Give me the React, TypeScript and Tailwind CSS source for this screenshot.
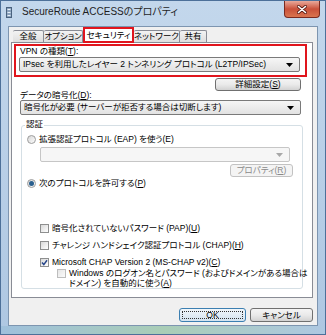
import React from "react";

const U = ({ children }: { children: React.ReactNode }) => (
  <span className="underline underline-offset-[1px] decoration-[0.8px]">{children}</span>
);

function Arrow({ disabled }: { disabled?: boolean }) {
  return (
    <svg width="7" height="4" viewBox="0 0 7 4" className="shrink-0">
      <path d="M0 0h7L3.5 4z" fill={disabled ? "#a8a8a8" : "#000"} />
    </svg>
  );
}

function Combo({ text, disabled }: { text?: React.ReactNode; disabled?: boolean }) {
  return (
    <div
      className={`h-[15px] flex items-center justify-between rounded-[2px] border pl-[3px] pr-[6px] ${
        disabled
          ? "border-[#c6c6c6] bg-[#f6f6f6]"
          : "border-[#7a7a7a] bg-linear-to-b from-[#f6f6f6] to-[#e2e2e2]"
      }`}
    >
      <span className="whitespace-nowrap leading-none">{text}</span>
      <Arrow disabled={disabled} />
    </div>
  );
}

function Btn({
  children,
  disabled,
  def,
  className,
}: {
  children: React.ReactNode;
  disabled?: boolean;
  def?: boolean;
  className?: string;
}) {
  const base = disabled
    ? "border-[#c2c2c2] bg-[#f4f4f4] text-[#8a8a8a]"
    : def
    ? "border-[#3c7fb1] bg-linear-to-b from-[#f1f7fb] to-[#d3e3ef]"
    : "border-[#707070] bg-linear-to-b from-[#f4f4f4] via-[#eaeaea] to-[#d2d2d2]";
  return (
    <div
      className={`flex items-center justify-center rounded-[3px] border whitespace-nowrap ${base} ${className ?? ""}`}
    >
      {def ? (
        <div className="w-[calc(100%-4px)] h-[calc(100%-4px)] border border-dotted border-[#333] flex items-center justify-center leading-none">
          {children}
        </div>
      ) : (
        <span className="leading-none">{children}</span>
      )}
    </div>
  );
}

function Radio({ checked }: { checked?: boolean }) {
  return (
    <span className="w-[9px] h-[9px] rounded-full border border-[#9c9c9c] bg-linear-to-br from-[#d6d6d6] to-[#fdfdfd] flex items-center justify-center shrink-0">
      {checked && <span className="w-[5px] h-[5px] rounded-full bg-[#2a5f8e]" />}
    </span>
  );
}

function Check({ checked, dim }: { checked?: boolean; dim?: boolean }) {
  return (
    <span
      className={`w-[9px] h-[9px] border flex items-center justify-center shrink-0 bg-linear-to-br ${
        dim ? "border-[#bdbdbd] from-[#e6e6e6] to-[#fbfbfb]" : "border-[#8e8f8f] from-[#d9d9d9] to-[#ffffff]"
      }`}
    >
      {checked && (
        <svg width="7" height="7" viewBox="0 0 7 7">
          <path d="M1 3.6l1.8 2L6 1.2" stroke="#27468a" strokeWidth="1.5" fill="none" />
        </svg>
      )}
    </span>
  );
}

const tabCls =
  "h-[12px] border border-l-0 border-b-0 border-[#898c95] bg-linear-to-b from-[#f3f3f3] to-[#dedede] flex items-center justify-center rounded-t-[2px] whitespace-nowrap";

export default function App() {
  return (
    <div className="w-[326px] h-[335px] flex flex-col bg-linear-to-b from-[#c3d7ec] to-[#aec7e2] border border-[#4d7099] text-[8.5px] leading-[11px] text-black font-['Liberation_Sans','Noto_Sans_CJK_JP',sans-serif] [font-feature-settings:'palt'] overflow-hidden">
      {/* title bar */}
      <div className="h-[25px] flex items-start shrink-0">
        <svg width="6" height="11" viewBox="0 0 6 11" className="ml-[5px] mt-[6px]">
          <rect x="0.5" y="0.5" width="5" height="10" fill="#8aa2bd" stroke="#4a627e" />
          <rect x="1.5" y="2" width="3" height="1" fill="#e8f0f8" />
          <rect x="1.5" y="5" width="3" height="1" fill="#e8f0f8" />
          <rect x="1.5" y="8" width="3" height="1" fill="#e8f0f8" />
        </svg>
        <div className="ml-[10px] mt-[5px] text-[10px] leading-[12px] text-[#1e1e1e] whitespace-nowrap">
          SecureRoute ACCESSのプロパティ
        </div>
        <div className="ml-auto mr-[5px] w-[36px] h-[17px] rounded-b-[4px] border border-t-0 border-[#7a2a20] bg-linear-to-b from-[#e9a99b] via-[#c9503a] to-[#d9744f] flex items-center justify-center">
          <svg width="10" height="9" viewBox="0 0 10 9">
            <path d="M1.5 1.5l7 6M8.5 1.5l-7 6" stroke="#5a1a12" strokeWidth="3" strokeLinecap="round" />
            <path d="M1.5 1.5l7 6M8.5 1.5l-7 6" stroke="#fff" strokeWidth="1.6" strokeLinecap="round" />
          </svg>
        </div>
      </div>

      {/* client */}
      <div className="mx-[7px] h-[300px] shrink-0 border border-[#7d95b0] bg-[#f0f0f0] flex flex-col">
        {/* tabs */}
        <div className="h-[15px] flex items-end pl-[4px] shrink-0">
          <div className={`w-[31px] border-l ${tabCls}`}>全般</div>
          <div className={`w-[39px] ${tabCls}`}>オプション</div>
          <div className="relative z-10 -mb-px w-[51px] h-[16px] border-2 border-[#e0151d] bg-white flex items-center justify-center whitespace-nowrap">
            セキュリティ
          </div>
          <div className={`w-[46px] ${tabCls}`}>ネットワーク</div>
          <div className={`w-[27px] ${tabCls}`}>共有</div>
        </div>

        {/* panel */}
        <div className="ml-[2px] w-[302px] h-[256px] border border-[#898c95] bg-white flex flex-col shrink-0">
          <div className="ml-[2px] mt-px w-[293px] h-[33px] border-2 border-[#e0151d] flex flex-col">
            <div className="pl-[4px] h-[11px] whitespace-nowrap">
              VPN の種類(<U>T</U>):
            </div>
            <div className="ml-[3px] w-[281px]">
              <Combo text="IPsec を利用したレイヤー 2 トンネリング プロトコル (L2TP/IPSec)" />
            </div>
          </div>

          <div className="flex justify-end pr-[11px] mt-px">
            <Btn className="w-[86px] h-[13px]">
              詳細設定(<U>S</U>)
            </Btn>
          </div>

          <div className="pl-[8px] h-[9px] leading-[9px] whitespace-nowrap">
            データの暗号化(<U>D</U>):
          </div>
          <div className="ml-[8px] w-[281px]">
            <Combo text="暗号化が必要 (サーバーが拒否する場合は切断します)" />
          </div>

          {/* group box */}
          <div className="relative ml-[9px] mt-[10px] w-[282px] h-[164px] border border-[#d5dfe5] rounded-[3px] flex flex-col">
            <div className="absolute left-[3px] -top-[7px] bg-white px-[1px] leading-[11px]">認証</div>
            <div className="mt-[8px] ml-[5px] h-[11px] flex items-center gap-[3px] whitespace-nowrap">
              <Radio />
              <span>拡張認証プロトコル (EAP) を使う(E)</span>
            </div>
            <div className="ml-[18px] mt-[2px] w-[250px]">
              <Combo disabled />
            </div>
            <div className="flex justify-end pr-[9px] mt-[2px]">
              <Btn disabled className="w-[63px] h-[13px]">
                プロパティ(<U>R</U>)
              </Btn>
            </div>
            <div className="mt-px ml-[5px] h-[11px] flex items-center gap-[3px] whitespace-nowrap">
              <Radio checked />
              <span>
                次のプロトコルを許可する(<U>P</U>)
              </span>
            </div>

            <div className="mt-[34px] ml-[18px] flex flex-col gap-[6px]">
              <div className="h-[11px] flex items-center gap-[3px] whitespace-nowrap">
                <Check />
                <span>
                  暗号化されていないパスワード (PAP)(<U>U</U>)
                </span>
              </div>
              <div className="h-[11px] flex items-center gap-[3px] whitespace-nowrap">
                <Check />
                <span>
                  チャレンジ ハンドシェイク認証プロトコル (CHAP)(<U>H</U>)
                </span>
              </div>
              <div className="h-[11px] flex items-center gap-[3px] whitespace-nowrap">
                <Check checked />
                <span>
                  Microsoft CHAP Version 2 (MS-CHAP v2)(<U>C</U>)
                </span>
              </div>
            </div>
            <div className="ml-[35px] flex items-start gap-[3px]">
              <span className="mt-[1px]">
                <Check dim />
              </span>
              <span className="leading-[10px] whitespace-nowrap">
                Windows のログオン名とパスワード (およびドメインがある場合は
                <br />
                ドメイン) を自動的に使う(<U>A</U>)
              </span>
            </div>
          </div>
        </div>

        {/* buttons */}
        <div className="mt-[10px] flex justify-end gap-[4px] pr-[4px]">
          <Btn def className="w-[67px] h-[14px]">
            OK
          </Btn>
          <Btn className="w-[63px] h-[14px]">キャンセル</Btn>
        </div>
      </div>

      {/* bottom frame */}
      <div className="flex-1 bg-linear-to-r from-[#9fc0dc] via-[#a9cdb6] to-[#aec8e2]" />
    </div>
  );
}
